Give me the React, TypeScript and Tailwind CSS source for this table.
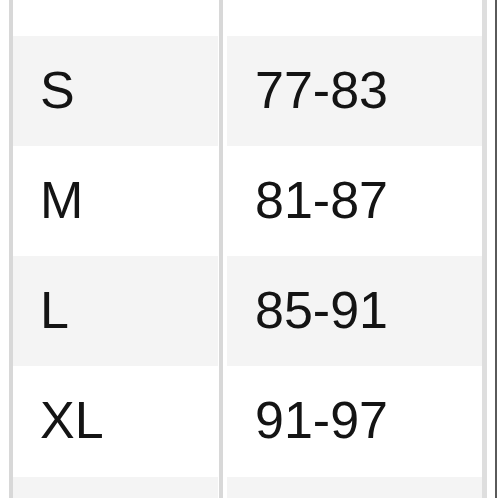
const rows = [
  { size: 'S', chest: '77-83', shade: true },
  { size: 'M', chest: '81-87', shade: false },
  { size: 'L', chest: '85-91', shade: true },
  { size: 'XL', chest: '91-97', shade: false },
];

function Cell({ text, shade, pad }: { text?: string; shade: boolean; pad: string }) {
  return (
    <div
      className={`h-[110px] shrink-0 flex items-center ${pad} ${shade ? 'bg-[#f4f4f4]' : 'bg-white'}`}
    >
      <span className="text-[52px] leading-none text-[#141414] -translate-y-[1px]">{text}</span>
    </div>
  );
}

function Column({ width, pad, field }: { width: string; pad: string; field: 'size' | 'chest' }) {
  return (
    <div className={`${width} flex flex-col shrink-0`}>
      <div className="h-[36px] shrink-0 bg-white" />
      {rows.map((r) => (
        <Cell key={r.size} text={r[field]} shade={r.shade} pad={pad} />
      ))}
      <div className="h-[30px] shrink-0 bg-[#f4f4f4] mt-[1px]" />
    </div>
  );
}

export default function App() {
  return (
    <div
      className="w-[498px] h-[498px] overflow-hidden bg-white flex"
      style={{ fontFamily: '"Liberation Sans", Arial, sans-serif' }}
    >
      <div className="w-[9px] shrink-0" />
      <div className="w-[4px] shrink-0 bg-[#d8d8d8]" />
      <Column width="w-[205px]" pad="pl-[27px]" field="size" />
      <div className="w-[1px] shrink-0" />
      <div className="w-[4px] shrink-0 bg-[#d8d8d8]" />
      <div className="w-[4px] shrink-0" />
      <Column width="w-[255px]" pad="pl-[28px]" field="chest" />
      <div className="w-[5px] shrink-0 bg-[#dedede]" />
      <div className="w-[8px] shrink-0" />
      <div className="w-[2px] shrink-0 bg-[#5a5a5a]" />
    </div>
  );
}
